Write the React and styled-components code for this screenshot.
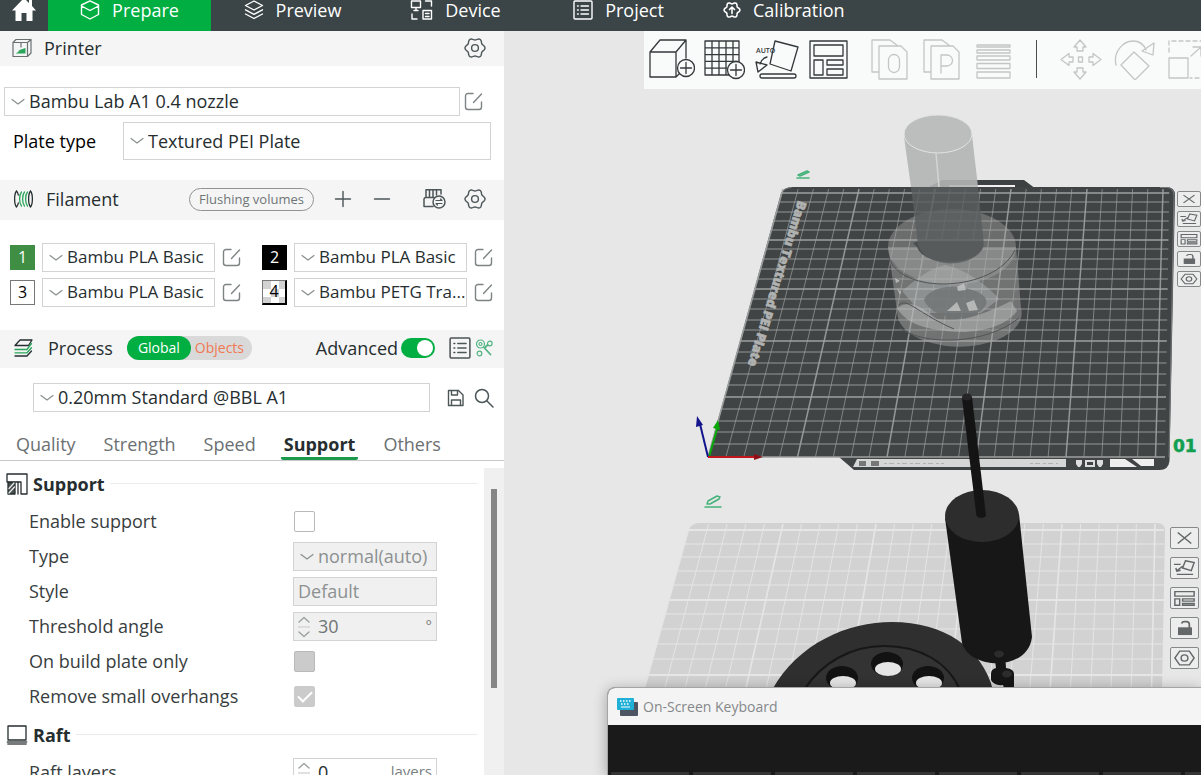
import React from 'react';
import styled, { createGlobalStyle, css } from 'styled-components';

const GlobalStyle = createGlobalStyle`
  *, *::before, *::after { box-sizing: border-box; }
  html, body, #root { height: 100%; }
  body {
    margin: 0;
    overflow: hidden;
    background: #e7e7e7;
    color: #262e30;
    font: 18px/24px "Open Sans", "Noto Sans", sans-serif;
  }
  button, input, select { font: inherit; color: inherit; margin: 0; }
  svg { display: block; flex: none; }
`;

/* ---------- frame ---------- */

const Frame = styled.div`
  display: flex;
  flex-direction: column;
  height: 100vh;
  overflow: hidden;
`;

const TopBar = styled.nav`
  display: flex;
  flex: none;
  height: 31px;
  overflow: hidden;
  background: #3b4446;
  color: #fff;
`;

const TopTab = styled.button`
  display: flex;
  align-items: center;
  justify-content: center;
  gap: 12px;
  flex: none;
  height: 31px;
  min-width: ${(p) => (p.$home ? '48px' : '163px')};
  padding: 0 ${(p) => (p.$wide ? '23px' : '0')} 12px;
  border: 0;
  background: ${(p) => (p.$active ? '#00ae42' : 'transparent')};
  color: #fff;
  line-height: 18px;
`;

const Body = styled.div`
  display: grid;
  grid-template-columns: 504px minmax(0, 1fr);
  flex: 1;
  min-height: 0;
`;

/* ---------- sidebar ---------- */

const Sidebar = styled.aside`
  display: flex;
  flex-direction: column;
  min-height: 0;
  background: #fff;
`;

const SectionBar = styled.header`
  display: flex;
  align-items: center;
  flex: none;
  height: ${(p) => p.$height}px;
  padding: 0 ${(p) => p.$end || 18}px 2px 12px;
  background: #f5f5f5;
`;

const SectionTitle = styled.h2`
  margin: 0 0 0 ${(p) => p.$gap || 12}px;
  font-size: 18px;
  font-weight: 400;
`;

const Spacer = styled.div`
  flex: 1;
`;

const IconButton = styled.button`
  display: grid;
  place-items: center;
  flex: none;
  width: ${(p) => p.$width || 20}px;
  height: 24px;
  padding: 0;
  border: 0;
  background: none;
  color: #4c5557;
`;

const BarTools = styled.div`
  display: flex;
  align-items: center;
  gap: ${(p) => p.$gap}px;
  margin-right: ${(p) => p.$after || 0}px;
`;

const FlushButton = styled.button`
  height: 23px;
  width: 125px;
  padding: 0;
  border: 1px solid #8f9394;
  border-radius: 12px;
  background: transparent;
  color: #6f7577;
  font-size: 13px;
  line-height: 20px;
`;

const PrinterBody = styled.div`
  display: flex;
  flex-direction: column;
  gap: 6px;
  flex: none;
  padding: 21px 13px 20px 4px;
`;

const PrinterRow = styled.div`
  display: flex;
  align-items: center;
  gap: 4px;
  padding-right: 7px;
`;

const PlateRow = styled.div`
  display: grid;
  grid-template-columns: 110px 1fr;
  align-items: center;
  padding-left: 9px;
  color: #000;
`;

const SelectWrap = styled.div`
  display: flex;
  align-items: center;
  position: relative;
  flex: ${(p) => (p.$grow ? '1' : 'none')};
  min-width: 0;

  svg {
    position: absolute;
    left: 7px;
    pointer-events: none;
  }
`;

const SelectBox = styled.select`
  appearance: none;
  width: 100%;
  height: ${(p) => p.$height || 29}px;
  padding: 0 0 1px ${(p) => (p.$bare ? '4px' : '24px')};
  border: 1px solid #d3d3d3;
  border-radius: 0;
  background: #fff;
  color: #262e30;
  font-size: ${(p) => (p.$compact ? 17 : 18)}px;
  opacity: 1;
  text-overflow: clip;

  &:disabled {
    background: #f0f0f0;
    color: #8c9091;
  }
`;

const FilamentGrid = styled.div`
  display: grid;
  grid-template-columns: 252px 252px;
  row-gap: 6px;
  flex: none;
  padding: 23px 0 23px;
`;

const FilamentItem = styled.div`
  display: grid;
  grid-template-columns: 25px 173px 20px;
  column-gap: 7px;
  align-items: center;
  padding-left: 10px;
`;

const swatches = {
  green: css`
    background: #3f8e43;
    color: #fff;
  `,
  black: css`
    background: #000;
    color: #fff;
  `,
  white: css`
    background: #fff;
    color: #000;
    border: 1px solid #777;
  `,
  clear: css`
    background: repeating-conic-gradient(#fff 0 25%, #d2d2d2 0 50%) 0 0 / 16px 16px;
    color: #000;
    border: 1px solid #777;
    border-right: 2px solid #000;
    border-bottom: 2px solid #000;
  `,
};

const Swatch = styled.button`
  width: 25px;
  height: 25px;
  padding: 0 0 2px;
  border: 0;
  font-size: 16px;
  line-height: 20px;
  ${(p) => swatches[p.$kind]}
`;

const ScopeSwitch = styled.div`
  display: flex;
  height: 24px;
  width: 125px;
  margin-left: 14px;
  border-radius: 12px;
  background: #d9d9d9;
`;

const ScopeOption = styled.button`
  width: ${(p) => (p.$active ? 64 : 57)}px;
  height: 24px;
  padding: 0;
  border: 0;
  border-radius: 12px;
  background: ${(p) => (p.$active ? '#00ae42' : 'transparent')};
  color: ${(p) => (p.$active ? '#fff' : '#f07852')};
  font-size: 14px;
  line-height: 20px;
`;

const AdvancedLabel = styled.label`
  display: flex;
  align-items: center;
  gap: 3px;
  margin-right: 14px;
`;

const Toggle = styled.input`
  appearance: none;
  display: flex;
  justify-content: flex-end;
  width: 34px;
  height: 20px;
  padding: 2px;
  border-radius: 10px;
  background: #00ae42;

  &::after {
    content: '';
    width: 16px;
    height: 16px;
    border-radius: 50%;
    background: #fff;
  }
`;

const ProcessRow = styled.div`
  display: flex;
  align-items: center;
  gap: 8px;
  flex: none;
  padding: 15px 10px 15px 33px;
`;

const ProcessSelect = styled.div`
  flex: 1;
  margin-right: 8px;
`;

const Tabs = styled.div`
  display: flex;
  gap: 22px;
  flex: none;
  height: 34px;
  padding-left: 13px;
  border-bottom: 1px solid #c9c9c9;
`;

const Tab = styled.button`
  height: 33px;
  padding: 4px 3px 0;
  border: 0;
  border-bottom: 3px solid ${(p) => (p.$active ? '#1c9a4c' : 'transparent')};
  border-radius: 2px;
  background: none;
  color: ${(p) => (p.$active ? '#262e30' : '#6b7072')};
  font-weight: ${(p) => (p.$active ? 700 : 400)};
`;

const OptionsPane = styled.div`
  display: grid;
  grid-template-columns: minmax(0, 1fr) 20px;
  flex: 1;
  min-height: 0;
  overflow: hidden;
`;

const Options = styled.div`
  padding: 2px 6px 0;
  overflow: hidden;
`;

const ScrollTrack = styled.div`
  margin-top: 7px;
  padding: 21px 7px 0;
  background: #f0f0f0;
`;

const ScrollThumb = styled.div`
  height: 199px;
  background: #868686;
`;

const GroupHead = styled.h3`
  display: flex;
  align-items: center;
  gap: 5px;
  height: 41px;
  margin: 0;
  font-size: 18px;
  font-weight: 700;

  &::after {
    content: '';
    flex: 1;
    height: 1px;
    background: #ececec;
  }
`;

const OptionRow = styled.div`
  display: grid;
  grid-template-columns: 264px 144px;
  align-items: center;
  height: 35px;
  padding-left: 23px;
  color: #383e40;

  label { padding-bottom: 2px; }
`;

const Check = styled.input`
  appearance: none;
  display: grid;
  place-items: center;
  width: 21px;
  height: 21px;
  margin-left: 1px;
  border: 1px solid #b9b9b9;
  border-radius: 2px;
  background: #fff;

  &:disabled { background: #cbcbcb; }
  &:disabled:checked { border-color: #cbcbcb; }
  &:checked::after {
    content: '';
    width: 14px;
    height: 8px;
    margin-bottom: 4px;
    border: solid #fff;
    border-width: 0 0 2px 2px;
    transform: rotate(-45deg);
  }
`;

const SpinBox = styled.div`
  display: flex;
  align-items: center;
  height: 29px;
  padding: 0 4px;
  border: 1px solid #d3d3d3;
  background: ${(p) => (p.$disabled ? '#f0f0f0' : '#fff')};
  color: ${(p) => (p.$disabled ? '#6f7476' : '#262e30')};
`;

const SpinInput = styled.input`
  flex: 1;
  min-width: 0;
  height: 26px;
  padding: 0 0 2px 8px;
  border: 0;
  background: transparent;
`;

const Unit = styled.span`
  padding-bottom: 4px;
  color: #7a7f80;
  font-size: 15px;
`;

/* ---------- viewport ---------- */

const Viewport = styled.main`
  position: relative;
  min-width: 0;
  overflow: hidden;
  background: #e7e7e7;
`;

const SceneLayer = styled.div`
  position: absolute;
  inset: 0;
`;

const Toolbar = styled.div`
  position: relative;
  display: flex;
  align-items: center;
  height: 58px;
  margin-left: 140px;
  padding: 0 0 2px 5px;
  overflow: hidden;
  background: #f9fafa;
`;

const ToolGroup = styled.div`
  display: flex;
  flex: none;
  gap: ${(p) => p.$gap}px;
  color: ${(p) => (p.$muted ? '#c4c6c6' : '#33393b')};
`;

const ToolButton = styled.button`
  flex: none;
  width: ${(p) => p.$width}px;
  height: 42px;
  padding: 0;
  border: 0;
  background: none;
  color: inherit;
`;

const Divider = styled.div`
  flex: none;
  width: 1px;
  height: 38px;
  margin: 0 23px;
  background: #4a5052;
`;

const ToolGap = styled.div`
  flex: none;
  width: 22px;
`;

const PlateTools = styled.div`
  position: absolute;
  display: flex;
  flex-direction: column;
  left: ${(p) => (p.$small ? 673 : 666)}px;
  top: ${(p) => (p.$small ? 160 : 496)}px;
  gap: ${(p) => (p.$small ? 4 : 8)}px;
`;

const PlateButton = styled.button`
  width: ${(p) => (p.$small ? 24 : 29)}px;
  height: ${(p) => (p.$small ? 16 : 22)}px;
  padding: 0;
  border: 1px solid #85898a;
  border-radius: 2px;
  background: #ededed;
  color: #646869;

  svg { width: 100%; height: 100%; }
`;

const Keyboard = styled.section`
  position: absolute;
  left: 103px;
  right: 0;
  top: 656px;
  bottom: 0;
  min-height: 88px;
  display: flex;
  flex-direction: column;
  border: 1px solid #a5a5a5;
  border-width: 1px 0 0 1px;
  border-radius: 8px 0 0 0;
  background: #1a1a1a;
  box-shadow: 0 2px 14px rgba(0, 0, 0, 0.3);
  overflow: hidden;
`;

const KeyboardTitle = styled.header`
  display: flex;
  align-items: center;
  gap: 5px;
  flex: none;
  height: 37px;
  padding-left: 9px;
  background: #f4f4f4;
  color: #85888a;
  font-size: 14px;
`;

const KeyRow = styled.div`
  display: flex;
  gap: 4px;
  margin-top: 47px;
  padding-left: 3px;
`;

const Key = styled.div`
  flex: none;
  width: 78px;
  height: 40px;
  background: #343434;
`;

/* ---------- icons ---------- */

const Icon = ({ w = 20, h, vb, sw = 1.4, children }) => (
  <svg
    width={w}
    height={h || w}
    viewBox={vb || `0 0 ${w} ${h || w}`}
    fill="none"
    stroke="currentColor"
    strokeWidth={sw}
    strokeLinecap="round"
    strokeLinejoin="round"
    aria-hidden="true"
  >
    {children}
  </svg>
);

const lobed = (cx, cy, r, a) =>
  Array.from({ length: 72 }, (_, i) => {
    const t = (i * Math.PI) / 36;
    const q = r + a * Math.cos(6 * t);
    return `${i ? 'L' : 'M'}${(cx + q * Math.cos(t)).toFixed(2)} ${(cy + q * Math.sin(t)).toFixed(2)}`;
  }).join('') + 'Z';

const Chevron = () => (
  <Icon w={14} h={8} sw={1.2}>
    <path d="M1 1.5 7 6l6-4.5" stroke="#8a8f90" />
  </Icon>
);

const Gear = () => (
  <Icon w={22} sw={1.4}>
    <path d={lobed(11, 11, 9, 1)} />
    <circle cx="11" cy="11" r="3.4" />
  </Icon>
);

const Edit = () => (
  <Icon w={20}>
    <path d="M9 1.500H4a2.500 2.500 0 0 0-2.500 2.500v11A2.500 2.500 0 0 0 4 17.500h11a2.500 2.500 0 0 0 2.500-2.500v-5" stroke="#7e8485" />
    <path d="M9.500 10.500 17.500 2" stroke="#7e8485" />
  </Icon>
);

const HomeIcon = () => (
  <svg width="26" height="24" viewBox="0 0 26 24" fill="#fff" aria-hidden="true">
    <path d="M13 0 1 12.500h3.500V23h6v-8h5v8h6V12.500H25L21 8V2h-3v3z" />
  </svg>
);

const CubeIcon = () => (
  <Icon w={20}>
    <path d="M10 .8 18.500 5v9.500L10 19l-8.500-4.500V5z M1.500 6l8.500 4.500L18.500 6" />
  </Icon>
);

const LayersIcon = () => (
  <Icon w={20}>
    <path d="m10 1 8.500 4.500L10 10 1.500 5.500z M1.500 9.800 10 14.300l8.500-4.500 M1.500 14 10 18.500 18.500 14" />
  </Icon>
);

const DeviceIcon = () => (
  <Icon w={23} h={20}>
    <path d="M1.500 1h9v6.500h-9zM4 10.500h4M6 7.500v3M15.500 1h6v5M2 14v5h5M13 10.500h8.500V19H13zM15.500 13.500h3.500M15.500 16.500h3.500" />
  </Icon>
);

const ListIcon = ({ w = 20 }) => (
  <Icon w={w} vb="0 0 20 20">
    <rect x="1" y="1" width="18" height="18" rx="1" />
    <path d="M4.500 6h.8M8 6h7.500M4.500 10h.8M8 10h7.500M4.500 14h.8M8 14h7.500" />
  </Icon>
);

const CalibrationIcon = () => (
  <Icon w={18} sw={1.600}>
    <path d={lobed(9, 9, 7, 0.9)} />
    <path d="M9 12.500V6M6.500 8.500 9 6l2.500 2.500" />
  </Icon>
);

const PrinterIcon = () => (
  <Icon w={20} sw={1.200}>
    <path d="M1 4.500 4 1.500h15v13.500l-3.500 3.500H1zM1 4.500h14.500v14M15.500 4.500 19 1.500M9 5v4" stroke="#6a7072" />
    <path d="M3.500 15.500q3-1 4-3.500l6-2v5.500z" fill="#2aa55b" stroke="none" />
  </Icon>
);

const SpoolIcon = () => (
  <Icon w={22} h={20} sw={1.300}>
    <path d="M4.500 2C2 5 2 15 4.500 18M18.500 2c2.500 3 2.500 13 0 16c-2.500-3-2.500-13 0-16M4.500 2q1.500 1.500 1.800 4M4.500 18q1.500-1.500 1.800-4" />
    <path d="M9.500 3c-2.500 3-2.500 11 0 14M12.500 3c-2.500 3-2.500 11 0 14M15.500 3c-2.500 3-2.500 11 0 14" stroke="#2aa55b" />
  </Icon>
);

const ProcessIcon = () => (
  <Icon w={22} h={20} sw={1.300}>
    <path d="M8 2h12l-3.500 5.500H3z" />
    <path d="M3 11.500h12l4.500-6" stroke="#2aa55b" />
    <path d="M3 14.800h12l4.500-5" stroke="#2aa55b" />
    <path d="M3 18h12l4.500-5" />
  </Icon>
);

const AmsIcon = () => (
  <Icon w={24} h={22} sw={1.500}>
    <path d="M4 9.500V1.800h15V6M7.500 2v7M11 2v7M14.500 2v5M2 18.500V11a2 2 0 0 1 2-1.500h8M2 18.500h9" />
    <circle cx="17" cy="14" r="6" fill="#f5f5f5" />
    <path d="M14 12.500h6l-1.500-1.500M20 15.500h-6l1.500 1.500" strokeWidth="1.200" />
  </Icon>
);

const CompareIcon = () => (
  <Icon w={18} sw={1.200}>
    <g stroke="#52b583">
      <circle cx="5.500" cy="5" r="4" />
      <circle cx="5.500" cy="5" r="1.500" />
      <circle cx="14.800" cy="4.500" r="2.300" />
      <circle cx="4.500" cy="14.500" r="2.300" />
      <path d="m9 8.500 6.500 7M10.500 8l2-2" strokeWidth="1.800" />
    </g>
  </Icon>
);

const SaveIcon = () => (
  <Icon w={18} sw={1.400}>
    <path d="M1.500 1.500h10l4.500 4.500v10.500h-14.500zM4.500 1.500v4.500h6V2M4.500 16.500V11h9v5.500" />
  </Icon>
);

const SearchIcon = () => (
  <Icon w={20} sw={1.500}>
    <circle cx="8" cy="8" r="6.500" />
    <path d="m13 13 6 6" />
  </Icon>
);

const SupportIcon = () => (
  <Icon w={22} sw={1.300}>
    <path d="M1 1h20v20h-6V9H1z" />
    <path d="M2 9.500h7V21H2z" fill="#4a4f50" />
    <path d="M3 15.500 8 10M3 20l5.500-6" stroke="#e8e8e8" />
    <path d="M12 9v12" />
  </Icon>
);

const RaftIcon = () => (
  <Icon w={22} h={20} sw={1.300}>
    <path d="M2 1h18v14H2z" />
    <path d="M1.500 17h19M2 19h18" strokeWidth="1.800" stroke="#777b7c" />
  </Icon>
);

const SpinArrows = () => (
  <Icon w={12} h={22} sw={1.300}>
    <path d="M1 6l5-4.500L11 6M1 16l5 4.500L11 16" stroke="#9a9e9f" />
    <path d="M0 11h12" stroke="#d6d6d6" />
  </Icon>
);

const plateIcons = [
  ['Delete plate', <path key="p" d="M7 5l14 12M21 5 7 17" strokeWidth="1.600" />],
  ['Auto orient', <path key="p" d="m15 3 9 2-3 9-9-3zM3 7h7M6 14l6-5M5 11l1 3.500 4-1M6 18h17" />],
  ['Arrange', <path key="p" d="M4 4h20v5H4zM4 12h5v7H4zM12 12h12v2.500H12zM12 17h12v2H12z" />],
  [
    'Lock plate',
    <g key="p">
      <rect x="8" y="11" width="13" height="7" fill="currentColor" />
      <path d="M19 11V7a3 3 0 0 0-3-3h-2a3 3 0 0 0-3 2" strokeWidth="1.800" />
    </g>,
  ],
  [
    'Plate settings',
    <g key="p">
      <path d="m9 3.500h10l5 7.500-5 7.500H9L4 11z" />
      <circle cx="14" cy="11" r="3.500" />
    </g>,
  ],
];

const PlateToolbar = ({ small }) => (
  <PlateTools $small={small}>
    {plateIcons.map(([name, shape]) => (
      <PlateButton key={name} $small={small} aria-label={name}>
        <svg viewBox="0 0 28 22" preserveAspectRatio="none" fill="none" stroke="currentColor" strokeWidth="1.500">
          {shape}
        </svg>
      </PlateButton>
    ))}
  </PlateTools>
);

/* ---------- toolbar drawings ---------- */

const editTools = [
  ['Add object', 46, (
    <g key="a">
      <path d="M1 14h26v25H1zM1 14 11 2h26L27 14M37 2v18M27 39l4-4" />
      <circle cx="37" cy="30" r="8.500" fill="#f9fafa" />
      <path d="M37 24.500v11M31.500 30h11" />
    </g>
  )],
  ['Add plate', 42, (
    <g key="b">
      <path d="M2 3h34v34H2zM9 3v34M16 3v34M23 3v34M30 3v34M2 9.800h34M2 16.600h34M2 23.400h34M2 30.200h34" />
      <circle cx="33" cy="32" r="8.500" fill="#f9fafa" />
      <path d="M33 26.500v11M27.500 32h11" />
    </g>
  )],
  ['Auto orient', 46, (
    <g key="c">
      <path d="m22 3 23 6-7 24-21-7zM14 19c-4 1-6 4-7 7M3 24l2 10 9-7z" />
      <rect x="7" y="36" width="36" height="4" rx="2" />
      <text x="3" y="15" fontSize="7" fontWeight="600" fill="currentColor" stroke="none">AUTO</text>
    </g>
  )],
  ['Arrange', 42, (
    <path key="d" d="M3 3h37v37H3zM7 7h29v11H7zM7 22h9v15H7zM20 22h16v5H20zM20 31h16v6H20z" />
  )],
];

const splitTools = [
  ['Split to objects', 38, (
    <g key="e">
      <path d="M8 34H1V2h18l8 6M8 8h22l6 6v27H8z" />
      <rect x="17.500" y="16.500" width="11" height="18" rx="5.500" />
    </g>
  )],
  ['Split to parts', 38, (
    <g key="f">
      <path d="M8 34H1V2h18l8 6M8 8h22l6 6v27H8z" />
      <path d="M18 35V17h6a5 5 0 0 1 0 11h-6" />
    </g>
  )],
  ['Variable layer height', 38, (
    <path key="g" d="M2 7h33v2H2zM2 12h33v3H2zM2 18h33v4H2zM2 25.500h33v5H2zM2 34h33v6H2z" />
  )],
];

const moveTools = [
  ['Move', 42, (
    <path key="h" d="m20 2 6 7h-3v4h-6V9h-3zM20 41l6-7h-3v-4h-6v4h-3zM1 21.500l8-6v3.500h4v5H9v3.500zM41 21.500l-8-6v3.500h-4v5h4v3.500zM18.500 19h4v5h-4z" />
  )],
  ['Rotate', 42, (
    <path key="i" d="m20 14 15 14-14 14L7 27zM2 27C-1 14 9 3 19 3c7 0 11 4 13 9M28 13l11 4 1-12z" />
  )],
  ['Scale', 42, (
    <g key="j">
      <path d="M1 20h19v20H1z" />
      <path d="M1 14V3h40v37H22" strokeDasharray="4 3" />
      <path d="m23 18 10-9M25 9h8v9" />
    </g>
  )],
];

const ToolSet = ({ tools }) =>
  tools.map(([name, w, shape]) => (
    <ToolButton key={name} $width={w} aria-label={name}>
      <Icon w={w} h={42} sw={1.300}>{shape}</Icon>
    </ToolButton>
  ));

/* ---------- 3D scene ---------- */

const darkRows = [
  193, 202, 212, 221, 230, 240, 249, 259, 269, 279, 289, 299, 309, 320, 330, 341, 352, 363, 374, 385, 397, 409, 421,
  432, 444, 457,
];
const lightRows = [530, 544, 557, 571, 585, 600, 614, 629, 644, 659, 675];

const Scene = () => (
  <svg width="697" height="744" viewBox="504 31 697 744" aria-hidden="true">
    {/* active plate */}
    <path d="M925 189 942 180h82l12 9z" fill="#3d4142" />
    <path d="M949 185h66v2.500h-66z" fill="#f0f0f0" />
    <path d="M793 187H1166q9 0 9 8L1169.500 461q-1 9-10 9H854l-15-13H708L781 194q2-7 12-7z" fill="#414444" />
    <path d="M1160 187.500h6q8 0 8 8L1169 457M708 457 781.500 193q3-5 10-5.500" stroke="#777b7b" fill="none" />
    <g stroke="#9fa1a1" fill="none">
      {Array.from({ length: 26 }, (_, i) => (
        <path
          key={i}
          d={`M${783 + 15.2 * i} 189 ${708 + 17.9 * i} 457`}
          strokeWidth={i % 5 ? 0.8 : 1.5}
          opacity={i % 5 ? 0.85 : 0.9}
        />
      ))}
      {darkRows.map((y, i) => (
        <path key={y} d={`M${708 + (457 - y) * 0.278} ${y}H${1165 + (457 - y) * 0.016}`} strokeWidth={i % 5 ? 0.9 : 1.6} />
      ))}
    </g>
    <text
      transform="translate(798 200) rotate(107)"
      fill="#b0b2b2"
      stroke="#b0b2b2"
      strokeWidth=".6"
      fontSize="13"
      fontWeight="800"
      fontFamily="Open Sans"
    >
      Bambu Textured PEI Plate
    </text>
    <path d="M857 459h209v8H853z" fill="#d5d6d6" />
    <path d="M859 461h7v5h-7zM871 461h8v5h-8z" fill="#777" />
    <path d="M884 463.500h60M1030 463.500h28" stroke="#b0b2b2" strokeDasharray="3 2 5 3" />
    <path d="M1076 460h6v4l-2 3h-2l-2-3zM1097 460h6v4l-2 3h-2l-2-3z" fill="#ddd" />
    <path d="M1086 461h8v5h-8z" fill="none" stroke="#ddd" strokeWidth="2" />
    <path d="M1110 459h15l12 8h-27zM1132 459h22v7h-13z" fill="#eee" />

    {/* translucent model */}
    <path d="M888 247 898 318a61 33 0 0 0 123-10L1016 247z" fill="#a5a7a7" opacity=".48" />
    <ellipse cx="952" cy="247" rx="64" ry="38" fill="#a9abab" opacity=".4" />
    <path d="M902 291c12-10 26-22 43-26 22 5 42 20 54 34l-18 14h-60z" fill="#b9bbbb" opacity=".4" />
    <path d="M897 308c14-10 26 0 40 11 24 4 46-4 74-18l6 10c-12 17-45 25-78 19-22-3-35-10-42-22z" fill="#c5c7c7" opacity=".45" />
    <path d="M924 300c5-12 26-17 48-10 18 5 19 16 4 24-20 8-45 2-52-14z" fill="#6f7373" opacity=".8" />
    <path d="m947 311 10-9 4 9zM966 303l8-3 4 10-9 1zM957 287l7-4 2 7-8 1zM895 278l5 3-4 2zM897 288l4 4-1 3z" fill="#c5c7c7" opacity=".8" />
    <path d="M889 257c10 38 105 36 126-7M900 328c24 18 86 17 119-10M899 305c8-8 18 8 55 24" stroke="#515555" fill="none" />
    <path d="M913 243 919 241h64v6c-8 20-59 20-66 0z" fill="#4b4f4f" />
    <path d="M904 137 911 187H978L972 135z" fill="#b3b4b4" opacity=".9" />
    <path d="M911 187 918 245c7 24 58 25 66 0L978 187z" fill="#5a5e5e" opacity=".8" />
    <ellipse cx="938" cy="134" rx="34" ry="19" fill="#bcbdbd" stroke="#e2e3e3" />
    <path d="m936 153 3 34" stroke="#d3d4d4" strokeWidth="1.500" />

    {/* inactive plate */}
    <path d="M699 523h458q8 0 8 8l-3 160H644l44-160q3-8 11-8z" fill="#d2d2d2" />
    <g stroke="#e6e6e6" fill="none">
      {Array.from({ length: 26 }, (_, i) => (
        <path key={i} d={`M${690 + 18.6 * i} 524 ${644 + 20.3 * i} 690`} strokeWidth={i % 5 ? 0.9 : 1.6} />
      ))}
      {lightRows.map((y, i) => (
        <path key={y} d={`M${690 - (y - 523) * 0.275} ${y}H1164`} strokeWidth={i % 5 ? 1 : 1.800} />
      ))}
    </g>

    {/* solid models */}
    <path d="M772 690C798 643 848 622 892 622c52 0 90 26 101 68z" fill="#2f2f2f" />
    <path d="M804 690c18-28 48-44 80-44 36 0 64 16 76 44" fill="#333" stroke="#171717" strokeWidth="2" />
    <g fill="#121212">
      <ellipse cx="887" cy="664" rx="16" ry="12" />
      <ellipse cx="842" cy="678" rx="16" ry="12" />
      <ellipse cx="928" cy="678" rx="16" ry="12" />
    </g>
    <g fill="#e6e6e6">
      <ellipse cx="888" cy="669" rx="13" ry="7" />
      <ellipse cx="843" cy="683" rx="13" ry="7" />
      <ellipse cx="929" cy="683" rx="13" ry="7" />
    </g>
    <path d="M945 518 962 643c8 27 66 29 70-6L1019 514z" fill="#171717" />
    <ellipse cx="982" cy="516" rx="37" ry="26" fill="#2d2d2d" />
    <path d="M962 398 976.500 516q5 4 9.500 0L972 397z" fill="#141414" />
    <ellipse cx="967" cy="397" rx="5" ry="3.500" fill="#262626" />
    <path d="M994 653q6-5 11 0l1 15q8 1 8 6v14h-10l-1-3q-9 1-12-5v-6q0-5 5-6z" fill="#161616" />
    <ellipse cx="999" cy="654" rx="5" ry="3.500" fill="#2c2c2c" />
    <ellipse cx="1007" cy="674" rx="5" ry="3.500" fill="#2c2c2c" />

    {/* axes */}
    <g strokeWidth="2" fill="none">
      <path d="m709 457 8-28" stroke="#08a808" />
      <path d="m708 457-8-33" stroke="#14148c" />
      <path d="M708 457h52" stroke="#c0161c" />
    </g>
    <path d="m718 420 2 10-7-2z" fill="#08a808" />
    <path d="m697 416 6 9-7 2z" fill="#14148c" />
    <path d="m754 454 9 3-9 3z" fill="#8e1015" />

    {/* plate names */}
    <g stroke="#45b27a" strokeWidth="1.500" fill="none" strokeLinecap="round" strokeLinejoin="round">
      <path d="m798 175 9-4 2 1-9 4zM797 178h12" />
      <path d="m707 504 1-3 9-5 3 1-1 2-9 5zM705 507h16" />
    </g>
    <text x="1173" y="452" fill="#0f9f4f" stroke="#0f9f4f" strokeWidth=".5" fontSize="17" fontWeight="800" fontFamily="DejaVu Sans">01</text>
  </svg>
);

/* ---------- composed controls ---------- */

const Select = ({ value, label, id, height, disabled, bare, grow, compact }) => (
  <SelectWrap $grow={grow}>
    <SelectBox id={id} aria-label={label} $height={height} $bare={bare} $compact={compact} disabled={disabled}>
      <option>{value}</option>
    </SelectBox>
    {!bare && <Chevron />}
  </SelectWrap>
);

const Filament = ({ slot, kind, name }) => (
  <FilamentItem>
    <Swatch $kind={kind}>{slot}</Swatch>
    <Select compact value={name} label={`Filament ${slot}`} />
    <IconButton aria-label={`Edit filament ${slot}`}><Edit /></IconButton>
  </FilamentItem>
);

const Spin = ({ id, value, unit, disabled }) => (
  <SpinBox $disabled={disabled}>
    <SpinArrows />
    <SpinInput id={id} defaultValue={value} disabled={disabled} />
    <Unit>{unit}</Unit>
  </SpinBox>
);

const Option = ({ id, label, children }) => (
  <OptionRow>
    <label htmlFor={id}>{label}</label>
    {children}
  </OptionRow>
);

export default function App() {
  return (
    <Frame>
      <GlobalStyle />
      <TopBar>
        <TopTab $home aria-label="Home"><HomeIcon /></TopTab>
        <TopTab $active><CubeIcon />Prepare</TopTab>
        <TopTab><LayersIcon />Preview</TopTab>
        <TopTab><DeviceIcon />Device</TopTab>
        <TopTab><ListIcon />Project</TopTab>
        <TopTab $wide><CalibrationIcon />Calibration</TopTab>
      </TopBar>
      <Body>
        <Sidebar>
          <SectionBar $height={35}>
            <PrinterIcon />
            <SectionTitle>Printer</SectionTitle>
            <Spacer />
            <IconButton $width={22} aria-label="Printer settings"><Gear /></IconButton>
          </SectionBar>
          <PrinterBody>
            <PrinterRow>
              <Select grow value="Bambu Lab A1 0.4 nozzle" label="Printer" />
              <IconButton aria-label="Edit printer"><Edit /></IconButton>
            </PrinterRow>
            <PlateRow>
              <label htmlFor="plate">Plate type</label>
              <Select id="plate" height={38} value="Textured PEI Plate" />
            </PlateRow>
          </PrinterBody>

          <SectionBar $height={40}>
            <SpoolIcon />
            <SectionTitle>Filament</SectionTitle>
            <Spacer />
            <BarTools $gap={19} $after={30}>
              <FlushButton>Flushing volumes</FlushButton>
              <IconButton aria-label="Add filament"><Icon w={18}><path d="M9 1.500v15M1.500 9h15" /></Icon></IconButton>
              <IconButton aria-label="Remove filament"><Icon w={18}><path d="M1.500 9h15" /></Icon></IconButton>
            </BarTools>
            <BarTools $gap={18}>
              <IconButton $width={24} aria-label="Sync filaments"><AmsIcon /></IconButton>
              <IconButton $width={22} aria-label="Filament settings"><Gear /></IconButton>
            </BarTools>
          </SectionBar>
          <FilamentGrid>
            <Filament slot="1" kind="green" name="Bambu PLA Basic" />
            <Filament slot="2" kind="black" name="Bambu PLA Basic" />
            <Filament slot="3" kind="white" name="Bambu PLA Basic" />
            <Filament slot="4" kind="clear" name="Bambu PETG Tra..." />
          </FilamentGrid>

          <SectionBar $height={38} $end={11}>
            <ProcessIcon />
            <SectionTitle $gap={14}>Process</SectionTitle>
            <ScopeSwitch>
              <ScopeOption $active>Global</ScopeOption>
              <ScopeOption>Objects</ScopeOption>
            </ScopeSwitch>
            <Spacer />
            <AdvancedLabel>
              Advanced
              <Toggle type="checkbox" role="switch" defaultChecked />
            </AdvancedLabel>
            <BarTools $gap={4}>
              <IconButton $width={22} aria-label="Parameter list"><ListIcon w={22} /></IconButton>
              <IconButton $width={18} aria-label="Compare presets"><CompareIcon /></IconButton>
            </BarTools>
          </SectionBar>
          <ProcessRow>
            <ProcessSelect>
              <Select value="0.20mm Standard @BBL A1" label="Process preset" />
            </ProcessSelect>
            <IconButton aria-label="Save preset"><SaveIcon /></IconButton>
            <IconButton aria-label="Search"><SearchIcon /></IconButton>
          </ProcessRow>
          <Tabs>
            <Tab>Quality</Tab>
            <Tab>Strength</Tab>
            <Tab>Speed</Tab>
            <Tab $active>Support</Tab>
            <Tab>Others</Tab>
          </Tabs>
          <OptionsPane>
            <Options>
              <GroupHead><SupportIcon />Support</GroupHead>
              <Option id="enable" label="Enable support"><Check id="enable" type="checkbox" /></Option>
              <Option id="type" label="Type"><Select id="type" value="normal(auto)" disabled /></Option>
              <Option id="style" label="Style"><Select id="style" value="Default" disabled bare /></Option>
              <Option id="angle" label="Threshold angle"><Spin id="angle" value="30" unit="°" disabled /></Option>
              <Option id="plateonly" label="On build plate only"><Check id="plateonly" type="checkbox" disabled /></Option>
              <Option id="overhangs" label="Remove small overhangs">
                <Check id="overhangs" type="checkbox" disabled defaultChecked />
              </Option>
              <GroupHead><RaftIcon />Raft</GroupHead>
              <Option id="raft" label="Raft layers"><Spin id="raft" value="0" unit="layers" /></Option>
            </Options>
            <ScrollTrack><ScrollThumb /></ScrollTrack>
          </OptionsPane>
        </Sidebar>

        <Viewport>
          <SceneLayer><Scene /></SceneLayer>
          <PlateToolbar small />
          <PlateToolbar />
          <Toolbar>
            <ToolGroup $gap={8}><ToolSet tools={editTools} /></ToolGroup>
            <ToolGap />
            <ToolGroup $gap={14} $muted><ToolSet tools={splitTools} /></ToolGroup>
            <Divider />
            <ToolGroup $gap={12} $muted><ToolSet tools={moveTools} /></ToolGroup>
          </Toolbar>
          <Keyboard>
            <KeyboardTitle>
              <svg width="21" height="20" viewBox="0 0 21 20" aria-hidden="true">
                <rect x="3" y="5" width="18" height="14" rx="1" fill="#4d5563" />
                <rect x="0" y="1" width="17" height="12" rx="1" fill="#1fb0d8" />
                <path d="M3 4h11M4 7h9" stroke="#fff" strokeWidth="1.500" strokeDasharray="1.500 1.500" />
                <path d="M4 10h9" stroke="#fff" />
              </svg>
              On-Screen Keyboard
            </KeyboardTitle>
            <KeyRow>
              {Array.from({ length: 12 }, (_, i) => <Key key={i} />)}
            </KeyRow>
          </Keyboard>
        </Viewport>
      </Body>
    </Frame>
  );
}
